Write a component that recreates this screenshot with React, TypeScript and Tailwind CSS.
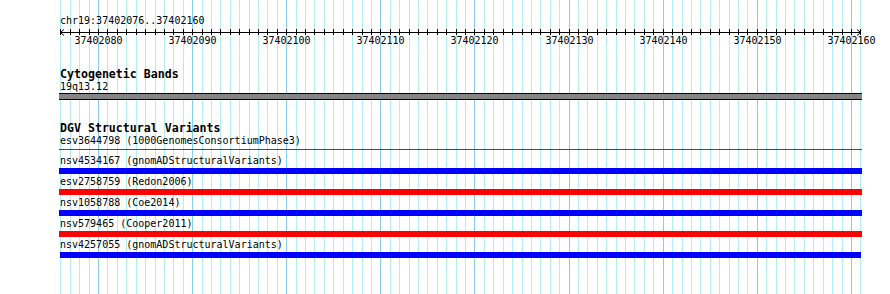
import React from 'react';

// view range and scale (800px for 85bp)
const START = 37402076;
const END = 37402160;
const X0 = 60.4;
const PX = 9.411;

const xAt = (i: number) => Math.round(X0 + i * PX);

const lineCount = END - START + 2;

const variants = [
  { id: 'esv3644798', source: '1000GenomesConsortiumPhase3', color: 'red', thin: true },
  { id: 'nsv4534167', source: 'gnomADStructuralVariants', color: 'blue' },
  { id: 'esv2758759', source: 'Redon2006', color: 'red' },
  { id: 'nsv1058788', source: 'Coe2014', color: 'blue' },
  { id: 'nsv579465', source: 'Cooper2011', color: 'red' },
  { id: 'nsv4257055', source: 'gnomADStructuralVariants', color: 'blue', inside: true },
];

const GridLines = () => (
  <div className="absolute inset-0">
    {Array.from({ length: lineCount }).map((_, i) => {
      const major = (START + i) % 10 === 0;
      return (
        <div
          key={i}
          className={`absolute top-0 bottom-0 w-px ${major ? 'bg-[#88cdea]' : 'bg-[#b0eef2]'}`}
          style={{ left: xAt(i) }}
        />
      );
    })}
  </div>
);

const Axis = () => {
  const ticks = Array.from({ length: lineCount }).map((_, i) => xAt(i) - 60);
  const labels = Array.from({ length: lineCount })
    .map((_, i) => START + i)
    .filter((p) => p % 10 === 0);

  return (
    <div className="relative h-[20px]">
      <svg className="absolute left-0 top-0" width={804} height={12} viewBox="0 0 804 12">
        <line x1={0} y1={6.5} x2={801} y2={6.5} stroke="black" strokeWidth={1} />
        {ticks.map((x, i) => (
          <line key={i} x1={x + 0.5} y1={3} x2={x + 0.5} y2={9} stroke="black" strokeWidth={1} />
        ))}
        <polyline points="4,3.5 0.5,6.5 4,9.5" fill="none" stroke="black" strokeWidth={1} />
        <polyline points="797,3.5 800.5,6.5 797,9.5" fill="none" stroke="black" strokeWidth={1} />
      </svg>
      {labels.map((p) => {
        const x = xAt(p - START) - 60;
        return (
          <div
            key={p}
            className="absolute top-[10px] w-[60px] text-center text-[10px] leading-[10px]"
            style={{ left: x - 30 + 0.5 }}
          >
            {p}
          </div>
        );
      })}
    </div>
  );
};

export default function App() {
  return (
    <div className="relative w-[890px] h-[294px] overflow-hidden bg-white text-black font-['DejaVu_Sans_Mono',monospace]">
      <GridLines />

      <div className="relative pl-[60px]">
        <div className="mt-[16px] text-[10px] leading-[10px]">chr19:37402076..37402160</div>
        <Axis />

        {/* cytogenetic bands track */}
        <div className="mt-[22px] text-[11.6px] leading-[12px] font-bold">Cytogenetic Bands</div>
        <div className="mt-[2px] text-[10px] leading-[10px]">19q13.12</div>
        <div className="mt-px -ml-px h-[7px] w-[803px] border-y border-black bg-[#858585]" />

        {/* DGV track */}
        <div className="mt-[22px] text-[11.6px] leading-[12px] font-bold">DGV Structural Variants</div>
        {variants.map((v, i) => (
          <div key={v.id} className={i === 0 ? 'mt-[2px]' : i === 1 ? 'mt-[6px]' : 'mt-[3px]'}>
            <div className="text-[10px] leading-[10px] whitespace-pre">
              {v.id} ({v.source})
            </div>
            {v.thin ? (
              <div className="mt-[3px] -ml-px h-px w-[803px] bg-[#ff0000]" />
            ) : (
              <div
                className={`mt-[2px] h-[6px] ${v.inside ? 'w-[801px]' : '-ml-px w-[803px]'} ${
                  v.color === 'red' ? 'bg-[#ff0000]' : 'bg-[#0000ff]'
                }`}
              />
            )}
          </div>
        ))}
      </div>
    </div>
  );
}
